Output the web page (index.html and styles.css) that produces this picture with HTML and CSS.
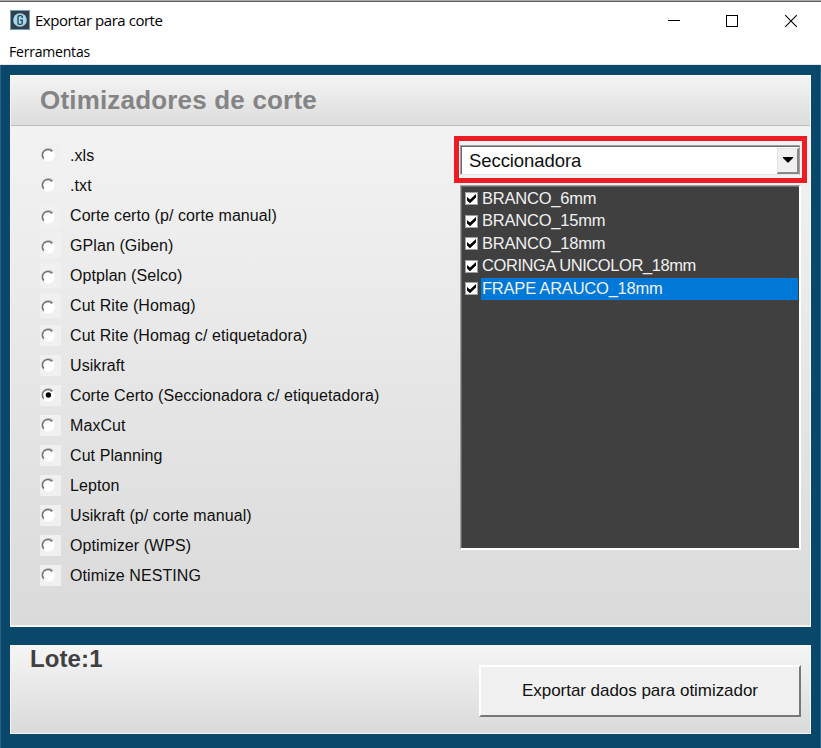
FILE: index.html
```html
<!DOCTYPE html>
<html lang="pt-BR">
<head>
<meta charset="utf-8">
<title>Exportar para corte</title>
<link rel="stylesheet" href="styles.css">
</head>
<body>
<svg width="0" height="0" class="defs">
  <symbol id="radio" viewBox="0 0 14 14">
    <circle cx="7" cy="7" r="6.6" fill="#fff"/>
    <path d="M2.6 11.4A6.2 6.2 0 0 1 11.9 2.9" fill="none" stroke="#a0a0a0" stroke-width="1.2"/>
    <path d="M2.8 10.4A5.2 5.2 0 0 1 11 3.5" fill="none" stroke="#696969" stroke-width="1.2"/>
  </symbol>
  <symbol id="check" viewBox="0 0 13 13">
    <rect width="13" height="13" fill="#a0a0a0"/>
    <rect x="1" y="1" width="11" height="11" fill="#fff"/>
    <path d="M2 5L5 7.4L11 2V5.6L5 11.2L2 8.6Z" fill="#000"/>
  </symbol>
</svg>
<div class="window">
  <header class="titlebar">
    <svg class="logo" width="20" height="20" viewBox="0 0 20 20">
      <rect x=".5" y=".5" width="19" height="19" fill="#343f49" stroke="#6fa0bb"/>
      <circle cx="10" cy="10" r="6.8" fill="#a6d8ef"/>
      <path d="M12.2 8V6.8Q12.2 5.6 11 5.6H9.4Q8 5.6 8 7V13Q8 14.4 9.4 14.4H10.8Q12.2 14.4 12.2 13V10.3H10.2" fill="none" stroke="#2e4552" stroke-width="1.4"/>
    </svg>
    <span class="title">Exportar para corte</span>
    <svg class="controls" width="132" height="14" viewBox="0 0 132 14" fill="none" stroke="#000">
      <path d="M0 6.5H12"/>
      <rect x="58.5" y="1.5" width="11" height="11"/>
      <path d="M117.2 1.2L128.8 12.8M128.8 1.2L117.2 12.8" stroke-width="1.1"/>
    </svg>
  </header>
  <nav class="menu"><span>Ferramentas</span></nav>
  <main class="client">
    <section class="panel">
      <h1 class="heading"><span>Otimizadores de corte</span></h1>
      <div class="content">
        <ul class="options">
          <li><i><svg><use href="#radio"/></svg></i><span>.xls</span></li>
          <li><i><svg><use href="#radio"/></svg></i><span>.txt</span></li>
          <li class="low"><i><svg><use href="#radio"/></svg></i><span>Corte certo (p/ corte manual)</span></li>
          <li class="low"><i><svg><use href="#radio"/></svg></i><span>GPlan (Giben)</span></li>
          <li class="low"><i><svg><use href="#radio"/></svg></i><span>Optplan (Selco)</span></li>
          <li class="low"><i><svg><use href="#radio"/></svg></i><span>Cut Rite (Homag)</span></li>
          <li><i><svg><use href="#radio"/></svg></i><span>Cut Rite (Homag c/ etiquetadora)</span></li>
          <li><i><svg><use href="#radio"/></svg></i><span>Usikraft</span></li>
          <li><i><svg><use href="#radio"/><circle cx="7.4" cy="7" r="2.7"/></svg></i><span>Corte Certo (Seccionadora c/ etiquetadora)</span></li>
          <li><i><svg><use href="#radio"/></svg></i><span>MaxCut</span></li>
          <li><i><svg><use href="#radio"/></svg></i><span>Cut Planning</span></li>
          <li><i><svg><use href="#radio"/></svg></i><span>Lepton</span></li>
          <li><i><svg><use href="#radio"/></svg></i><span>Usikraft (p/ corte manual)</span></li>
          <li><i><svg><use href="#radio"/></svg></i><span>Optimizer (WPS)</span></li>
          <li><i><svg><use href="#radio"/></svg></i><span>Otimize NESTING</span></li>
        </ul>
        <div class="side">
          <div class="highlight">
            <div class="combo">
              <span>Seccionadora</span>
              <div class="drop"><svg width="10" height="6" viewBox="0 0 10 6"><path d="M0 0H10V1L5.5 5.5H4.5L0 1Z"/></svg></div>
            </div>
          </div>
          <ul class="list">
            <li><svg><use href="#check"/></svg><span>BRANCO_6mm</span></li>
            <li><svg><use href="#check"/></svg><span>BRANCO_15mm</span></li>
            <li><svg><use href="#check"/></svg><span>BRANCO_18mm</span></li>
            <li><svg><use href="#check"/></svg><span class="tight">CORINGA UNICOLOR_18mm</span></li>
            <li class="selected"><svg><use href="#check"/></svg><span>FRAPE ARAUCO_18mm</span></li>
          </ul>
        </div>
      </div>
    </section>
    <section class="footer">
      <strong>Lote:1</strong>
      <button><span>Exportar dados para otimizador</span></button>
    </section>
  </main>
</div>
</body>
</html>
```

FILE: styles.css
```css
* { box-sizing: border-box; }
html, body { margin: 0; height: 100%; overflow: hidden; }
body { font-family: "Liberation Sans", Arial, sans-serif; font-size: 16px; color: #101010; }
ul { list-style: none; margin: 0; padding: 0; }
.defs { position: absolute; }
.window { width: 821px; height: 748px; display: flex; flex-direction: column; background: #fff; border-top: 1px solid #a9a9a9; }
.titlebar { height: 38px; flex: none; display: flex; align-items: center; padding: 0 21px 0 10px; border-top: 1px solid #5c5c5c; }
.logo { margin-top: -1px; }
.title { margin: -2px 0 0 5px; font: 15px/20px "Open Sans", sans-serif; letter-spacing: -0.46px; color: #000; flex: 1; }
.controls { flex: none; width: 132px; }
.menu { height: 26px; flex: none; padding-left: 9px; font: 14px/26px "Open Sans", sans-serif; letter-spacing: -0.2px; color: #000; border-bottom: 1px solid #e8e8e8; }
.client { flex: 1; background: #09476b; padding: 10px 9px; border-left: 1px solid #2a6184; border-right: 1px solid #2a6184; }
.panel { height: 552px; background: linear-gradient(#f5f5f5, #dadada); border: 1px solid #f5f5f5; border-bottom-width: 2px; border-top-color: #fff; display: flex; flex-direction: column; }
.heading { margin: 0; height: 50px; flex: none; padding-left: 29px; font-size: 26px; line-height: 48px; letter-spacing: 0.18px; color: #848484; background: linear-gradient(#f4f4f4, #dcdcdc); border-bottom: 1px solid #bdbdbd; }
.content { flex: 1; display: flex; justify-content: space-between; padding: 10px 3px 0 29px; }
.options { padding-top: 4px; }
.options li { height: 30px; display: flex; align-items: center; }
.options i { width: 21px; height: 21px; flex: none; background: #f0f0f0; display: flex; padding: 3px 0 0 1px; }
.options .low i { height: 25px; }
.options .low svg { margin-top: 4px; }
.options svg { width: 14px; height: 14px; }
.options span { margin: 2px 0 0 9px; white-space: nowrap; letter-spacing: 0.08px; }
.side { width: 353px; }
.highlight { height: 47px; border: 5px solid #ed1c24; background: #f2f2f2; padding: 4px 2px 3px 1px; }
.combo { height: 30px; border: 1px solid #a0a0a0; border-bottom-color: #e3e3e3; box-shadow: inset 1px 1px #696969; background: #fff; display: flex; align-items: center; justify-content: space-between; padding: 2px 0 1px 8px; font-size: 18.5px; letter-spacing: -0.08px; }
.drop { width: 22px; height: 26px; background: #f0f0f0; border: 1px solid #e3e3e3; border-right: 2px solid #888; border-bottom: 2px solid #888; display: flex; align-items: center; justify-content: center; }
.list { width: 341px; height: 365px; margin: 2px 0 0 6px; border: 1px solid #a0a0a0; border-right: 2px solid #fff; border-bottom: 2px solid #fff; box-shadow: inset 1px 1px #696969; background: #404040; color: #f0f0f0; padding: 1.5px 1px 0 4px; font-size: 16.5px; }
.list li { height: 22.5px; display: flex; align-items: center; }
.list svg { width: 13px; height: 13px; flex: none; margin-right: 3px; }
.list span { flex: 1; line-height: 20.5px; padding: 0 0 2px 1px; letter-spacing: -0.22px; }
.list .tight { letter-spacing: -0.43px; }
.selected span { background: #0078d7; }
.footer { height: 89px; margin-top: 18px; background: linear-gradient(#f5f5f5, #dadada); border: 1px solid #f5f5f5; display: flex; justify-content: space-between; padding: 0 9px 0 19px; }
.footer strong { font-size: 24px; line-height: 26px; letter-spacing: 0.1px; color: #404040; }
.footer button { width: 322px; height: 52px; margin-top: 19px; background: #f0f0f0; border: 2px solid #fff; border-right-color: #777; border-bottom-color: #777; font: 17px "Liberation Sans", sans-serif; letter-spacing: -0.04px; color: #111; padding: 0; }
```
